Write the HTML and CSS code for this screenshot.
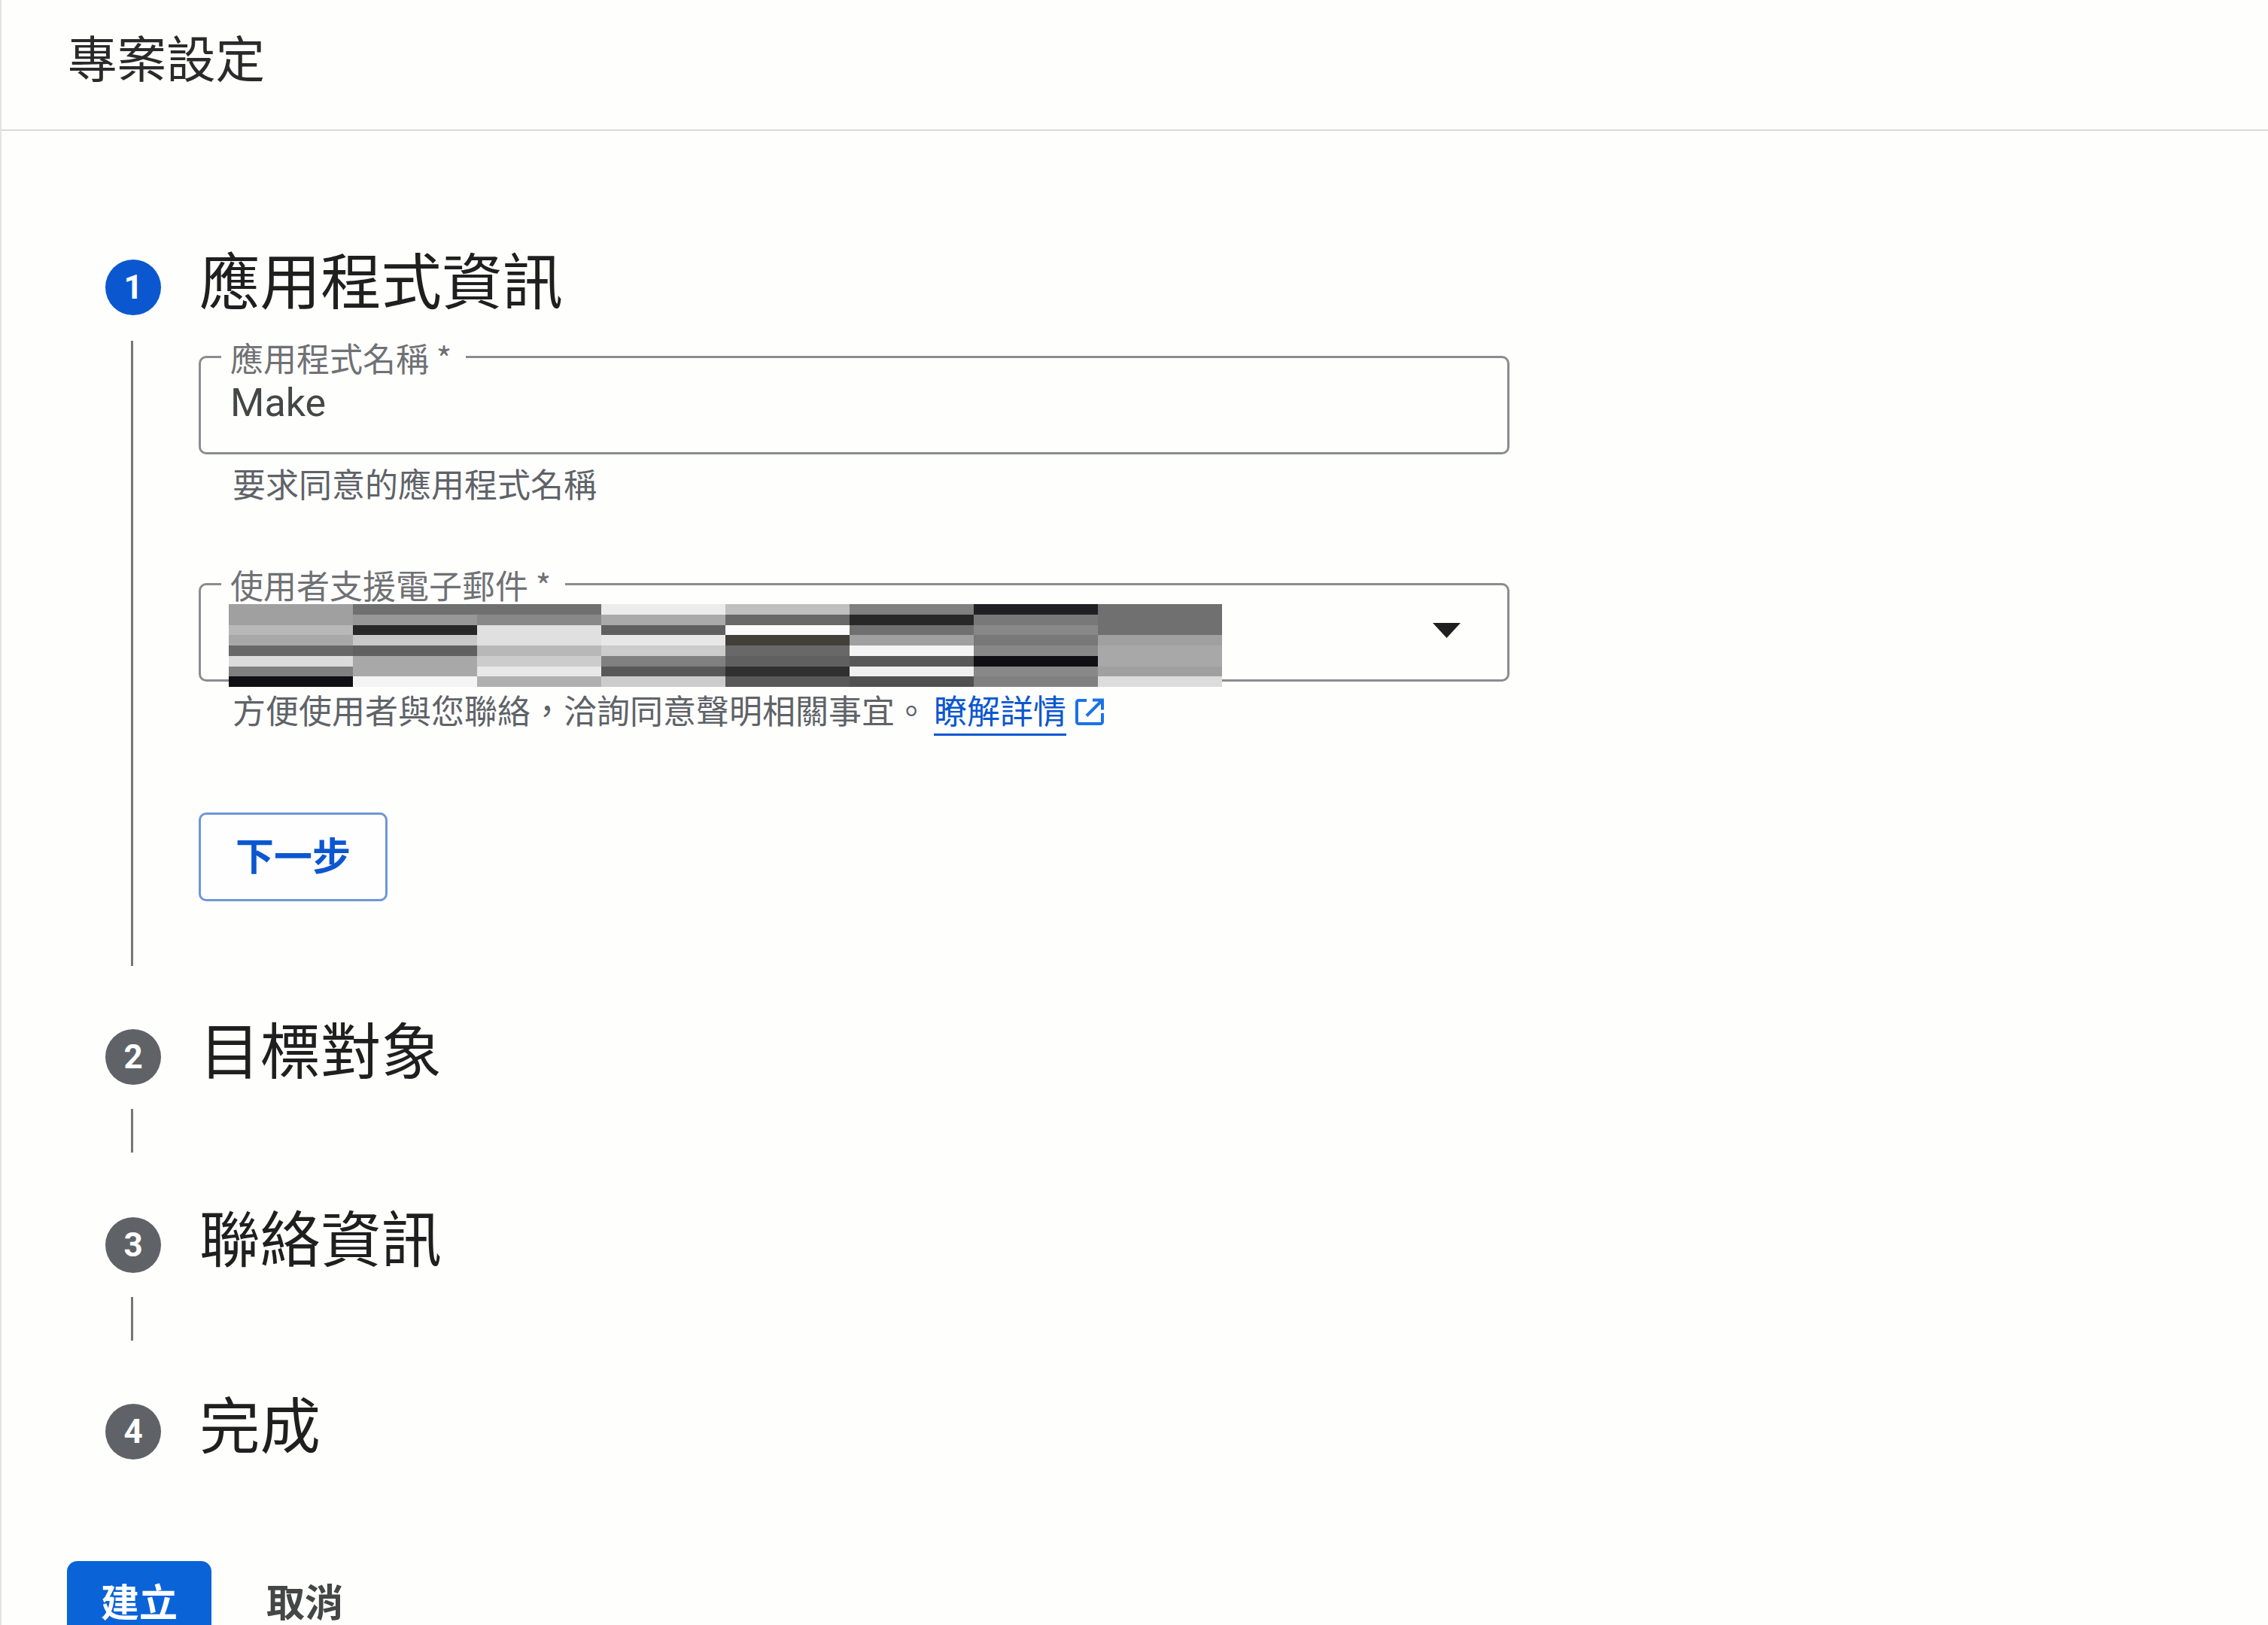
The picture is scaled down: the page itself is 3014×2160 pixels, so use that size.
FILE: index.html
```html
<!DOCTYPE html>
<html lang="zh-Hant">
<head>
<meta charset="utf-8">
<title>專案設定</title>
<link rel="stylesheet" href="styles.css">
</head>
<body>
<div class="page">
  <header class="page-header"><h1 class="page-title">專案設定</h1></header>
  <main class="stepper">
    <section class="step step-first">
      <div class="step-head"><span class="badge badge-active">1</span><h2 class="step-title">應用程式資訊</h2></div>
      <div class="step-body step-body-open">
        <div class="form">
          <div class="field field-name">
            <label class="field-label">應用程式名稱 *</label>
            <span class="field-value">Make</span>
          </div>
          <p class="hint hint-name">要求同意的應用程式名稱</p>
          <div class="field field-email">
            <label class="field-label">使用者支援電子郵件 *</label>
            <svg class="redacted" viewBox="0 0 8 8" preserveAspectRatio="none" shape-rendering="crispEdges" aria-hidden="true">
              <rect x="0" y="0" width="1.002" height="2" fill="#a0a0a0"/><rect x="0" y="2" width="1.002" height="1" fill="#b8b8b8"/><rect x="0" y="3" width="1.002" height="1" fill="#a8a8a8"/><rect x="0" y="4" width="1.002" height="1" fill="#686868"/><rect x="0" y="5" width="1.002" height="1" fill="#dcdcdc"/><rect x="0" y="6" width="1.002" height="1" fill="#808080"/><rect x="0" y="7" width="1.002" height="1" fill="#101014"/>
              <rect x="1" y="0" width="1.002" height="1" fill="#707070"/><rect x="1" y="1" width="1.002" height="1" fill="#989898"/><rect x="1" y="2" width="1.002" height="1" fill="#282828"/><rect x="1" y="3" width="1.002" height="1" fill="#c8c8c8"/><rect x="1" y="4" width="1.002" height="1" fill="#606060"/><rect x="1" y="5" width="1.002" height="2" fill="#a8a8a8"/><rect x="1" y="7" width="1.002" height="1" fill="#f4f4f4"/>
              <rect x="2" y="0" width="1.002" height="1" fill="#707070"/><rect x="2" y="1" width="1.002" height="1" fill="#888888"/><rect x="2" y="2" width="1.002" height="2" fill="#e0e0e0"/><rect x="2" y="4" width="1.002" height="1" fill="#b8b8b8"/><rect x="2" y="5" width="1.002" height="1" fill="#cccccc"/><rect x="2" y="6" width="1.002" height="1" fill="#e8e8e8"/><rect x="2" y="7" width="1.002" height="1" fill="#b0b0b0"/>
              <rect x="3" y="0" width="1.002" height="1" fill="#ececec"/><rect x="3" y="1" width="1.002" height="1" fill="#aaaaaa"/><rect x="3" y="2" width="1.002" height="1" fill="#606060"/><rect x="3" y="3" width="1.002" height="1" fill="#e8e8e8"/><rect x="3" y="4" width="1.002" height="1" fill="#cccccc"/><rect x="3" y="5" width="1.002" height="1" fill="#808080"/><rect x="3" y="6" width="1.002" height="1" fill="#585858"/><rect x="3" y="7" width="1.002" height="1" fill="#cccccc"/>
              <rect x="4" y="0" width="1.002" height="1" fill="#c0c0c0"/><rect x="4" y="1" width="1.002" height="1" fill="#686868"/><rect x="4" y="2" width="1.002" height="1" fill="#fafafa"/><rect x="4" y="3" width="1.002" height="1" fill="#404038"/><rect x="4" y="4" width="1.002" height="1" fill="#686868"/><rect x="4" y="5" width="1.002" height="1" fill="#606060"/><rect x="4" y="6" width="1.002" height="1" fill="#303030"/><rect x="4" y="7" width="1.002" height="1" fill="#585858"/>
              <rect x="5" y="0" width="1.002" height="1" fill="#808080"/><rect x="5" y="1" width="1.002" height="1" fill="#282828"/><rect x="5" y="2" width="1.002" height="1" fill="#707070"/><rect x="5" y="3" width="1.002" height="1" fill="#a0a0a0"/><rect x="5" y="4" width="1.002" height="1" fill="#f4f4f4"/><rect x="5" y="5" width="1.002" height="1" fill="#585858"/><rect x="5" y="6" width="1.002" height="1" fill="#f0f0f0"/><rect x="5" y="7" width="1.002" height="1" fill="#505050"/>
              <rect x="6" y="0" width="1.002" height="1" fill="#202024"/><rect x="6" y="1" width="1.002" height="1" fill="#787878"/><rect x="6" y="2" width="1.002" height="1" fill="#888888"/><rect x="6" y="3" width="1.002" height="1" fill="#787878"/><rect x="6" y="4" width="1.002" height="1" fill="#888888"/><rect x="6" y="5" width="1.002" height="1" fill="#101014"/><rect x="6" y="6" width="1.002" height="1" fill="#888888"/><rect x="6" y="7" width="1.002" height="1" fill="#808080"/>
              <rect x="7" y="0" width="1" height="1" fill="#707070"/><rect x="7" y="1" width="1" height="2" fill="#707070"/><rect x="7" y="3" width="1" height="1" fill="#a0a0a0"/><rect x="7" y="4" width="1" height="2" fill="#a8a8a8"/><rect x="7" y="6" width="1" height="1" fill="#a0a0a0"/><rect x="7" y="7" width="1" height="1" fill="#dcdcdc"/>
            </svg>
            <svg class="caret" viewBox="0 0 37 20" aria-hidden="true"><path d="M0 0H37L18.500 20Z"/></svg>
          </div>
          <p class="hint hint-email">方便使用者與您聯絡，洽詢同意聲明相關事宜。<a class="link" href="#">瞭解詳情</a><svg class="external" viewBox="0 0 38 36" aria-hidden="true"><path d="M15 3H4.500A2.500 2.500 0 0 0 2 5.500V31.500A2.500 2.500 0 0 0 4.500 34H33.500A2.500 2.500 0 0 0 36 31.500V20M23 2.500H36V15.500M35.500 3L15 23.500"/></svg></p>
          <button class="btn-next" type="button">下一步</button>
        </div>
      </div>
    </section>
    <section class="step step-second">
      <div class="step-head"><span class="badge">2</span><h2 class="step-title">目標對象</h2></div>
      <div class="step-body"></div>
    </section>
    <section class="step step-third">
      <div class="step-head"><span class="badge">3</span><h2 class="step-title">聯絡資訊</h2></div>
      <div class="step-body"></div>
    </section>
    <section class="step step-last">
      <div class="step-head"><span class="badge">4</span><h2 class="step-title">完成</h2></div>
    </section>
  </main>
  <footer class="actions">
    <button class="btn-create" type="button">建立</button>
    <button class="btn-cancel" type="button">取消</button>
  </footer>
</div>
</body>
</html>
```
FILE: styles.css
```css
* { box-sizing: border-box; }
html, body { margin: 0; padding: 0; height: 2160px; overflow: hidden; background: #fefefd; }
body { font-family: "Noto Sans CJK TC", "Noto Sans", sans-serif; color: #1f1f1f; }
.page { height: 2160px; overflow: hidden; border-left: 2px solid #e3e3e3; }
.page-header { height: 174px; border-bottom: 2px solid #d9dadc; padding: 40px 0 0 88px; }
.page-title { margin: 0; font-size: 65.500px; line-height: 70px; font-weight: 400; color: #2a2a2a; }
.stepper { padding: 149px 0 0 0; display: flex; flex-direction: column; }
.step-head { display: flex; align-items: center; height: 104px; padding-left: 138px; position: relative; }
.badge { position: absolute; left: 138px; top: 22px; width: 74px; height: 74px; border-radius: 50%; background: #5f6368; color: #fff; font-family: Roboto, sans-serif; font-weight: 700; font-size: 44px; display: flex; align-items: center; justify-content: center; }
.badge-active { background: #0b57d0; }
.step-title { margin: -12px 0 0 125px; font-size: 80.500px; line-height: 104px; font-weight: 400; color: #1f1f1f; }
.step-body { margin-left: 172px; border-left: 3px solid #747775; height: 58px; margin-top: 24px; }
.step-body-open { height: 831px; margin-top: 26px; }
.step-second { margin-top: 62px; }
.step-third { margin-top: 64px; }
.step-last { margin-top: 62px; }
.form { margin-left: 87px; width: 1742px; padding-top: 20px; }
.field { position: relative; height: 131px; border: 3px solid #8a8c8e; border-radius: 10px; padding-left: 39px; width: 1742px; }
.field-label { position: absolute; z-index: 1; left: 27px; top: -16px; padding: 0 19px 0 12px; height: 34px; line-height: 30px; background: #fefefd; font-size: 44px; color: #6f7174; white-space: nowrap; }
.field-value { display: block; padding-top: 30px; font-family: Roboto, sans-serif; font-size: 52px; line-height: 60px; color: #444746; }
.hint { margin: 0; font-size: 44px; line-height: 50px; color: #5f6368; padding-left: 45px; white-space: nowrap; }
.hint-name { margin-top: 13px; height: 158px; }
.redacted { display: block; position: relative; left: -2px; top: 25px; width: 1320px; height: 110px; }
.caret { position: absolute; right: 62px; top: 50px; width: 37px; height: 20px; fill: #1f1f1f; }
.hint-email { margin-top: 12px; height: 58px; display: flex; align-items: flex-start; }
.link { color: #0b57d0; text-decoration: none; border-bottom: 3px solid #0b57d0; margin-left: 8px; height: 60px; }
.external { width: 38px; height: 36px; margin: 10px 0 0 12px; fill: none; stroke: #1a73e8; stroke-width: 4; }
.btn-next { display: block; margin-top: 104px; width: 251px; height: 118px; background: #fefefe; border: 3px solid #6f96d6; border-radius: 10px; font: 700 51px/60px "Noto Sans CJK TC", sans-serif; color: #0b57d0; padding: 0 0 8px; }
.actions { display: flex; gap: 73px; padding: 0 0 0 87px; margin-top: 127px; }
.btn-create { width: 192px; height: 110px; border: 0; border-radius: 14px 14px 0 0; background: #0b63d8; color: #fff; font: 700 51px/60px "Noto Sans CJK TC", sans-serif; padding: 0 0 6px; }
.btn-cancel { width: 102px; height: 110px; border: 0; background: transparent; color: #444746; font: 700 51px/60px "Noto Sans CJK TC", sans-serif; padding: 0 0 6px; white-space: nowrap; }
```
